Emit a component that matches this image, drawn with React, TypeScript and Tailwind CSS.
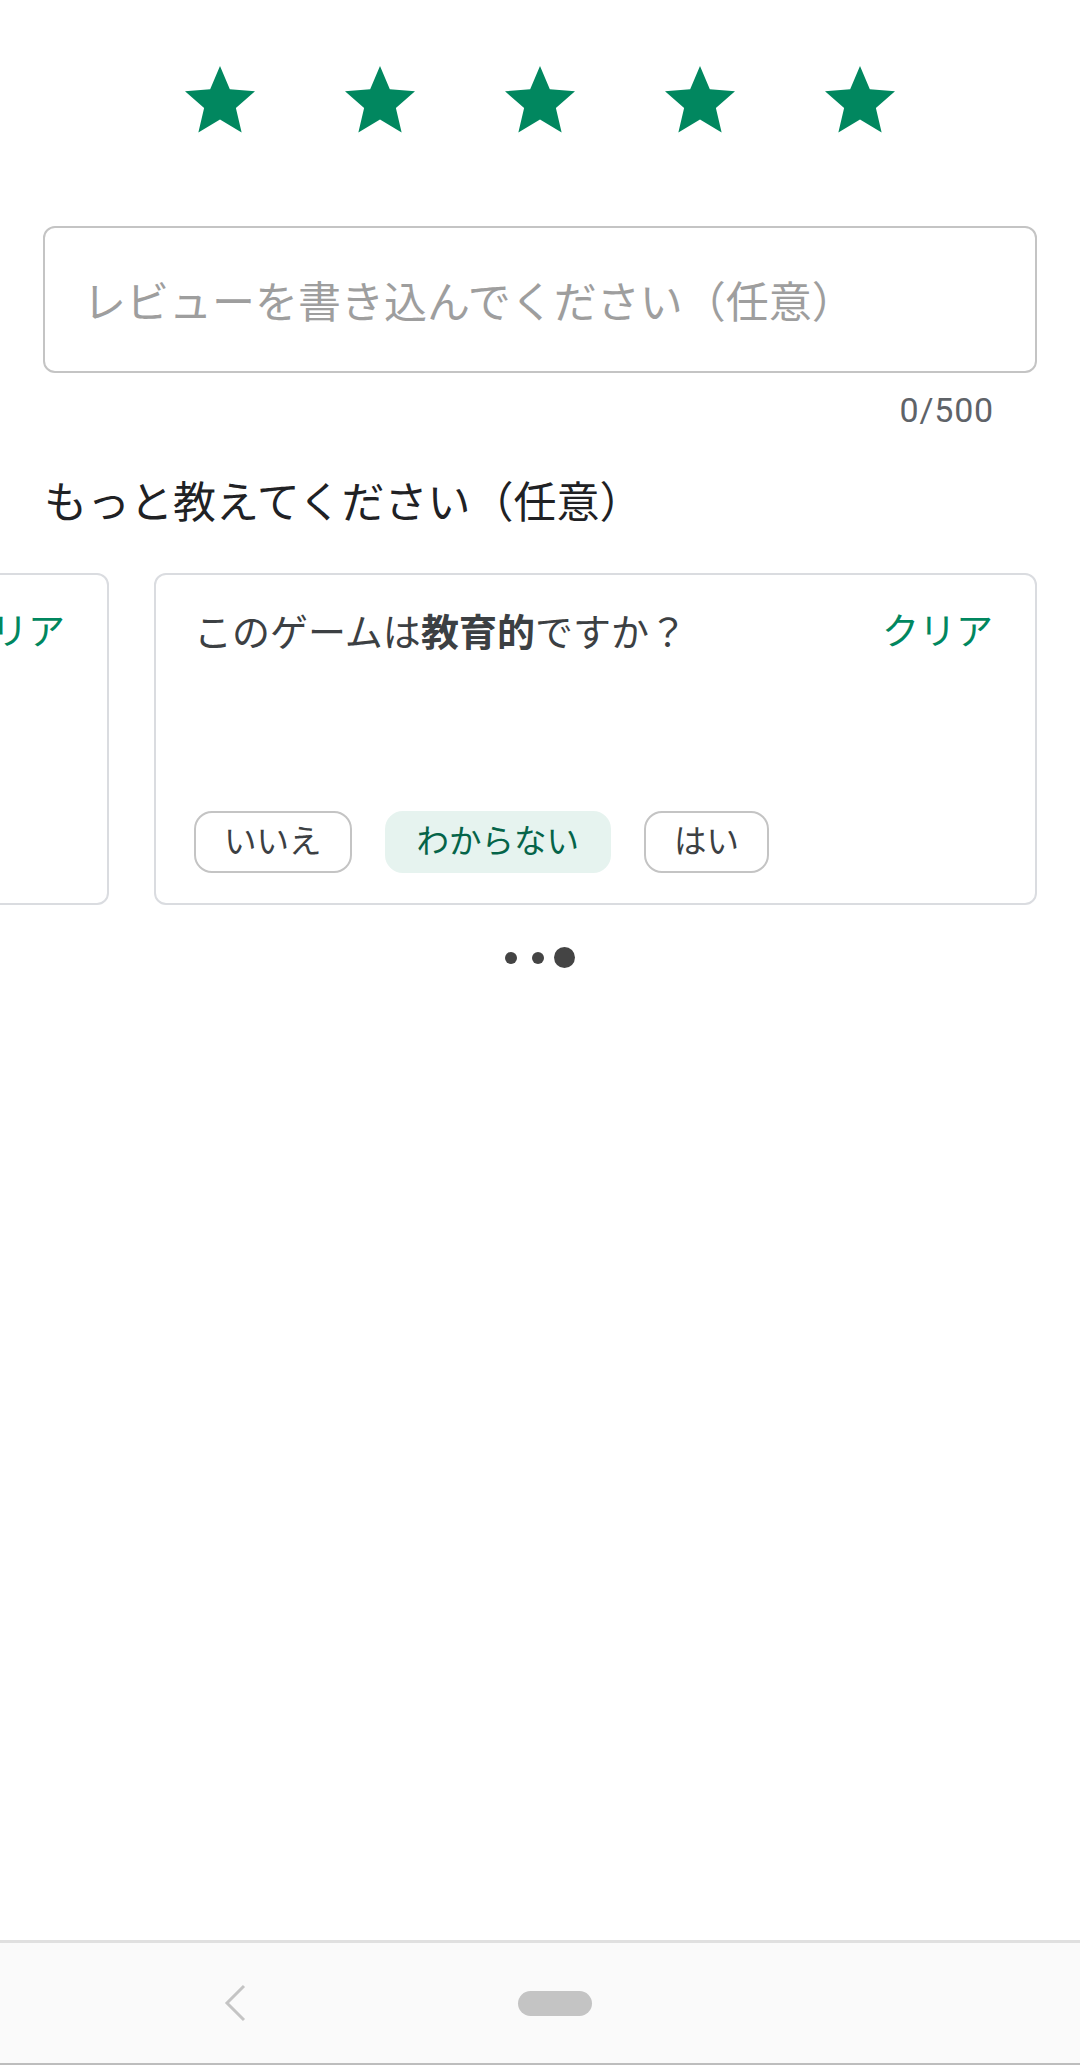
const STAR = 'M12 17.27L18.18 21l-1.64-7.03L22 9.24l-7.19-.61L12 2 9.19 8.63 2 9.24l5.46 4.73L5.82 21z';

function Star() {
  return (
    <div className="w-[160px] flex justify-center">
      <svg width="84" height="84" viewBox="0 0 24 24">
        <path d={STAR} fill="#01875f" />
      </svg>
    </div>
  );
}

function Pill({ label, active }: { label: string; active?: boolean }) {
  return (
    <div
      className={
        active
          ? 'h-[62px] px-[30px] flex items-center rounded-[18px] bg-[#e6f3ef] text-[#056449] text-[32.5px] border-[2px] border-[#e6f3ef]'
          : 'h-[62px] px-[28px] flex items-center rounded-[18px] bg-white text-[#3c4043] text-[32.5px] border-[2.5px] border-[#c4c4c4]'
      }
    >
      {label}
    </div>
  );
}

function Card({ question, className }: { question?: boolean; className?: string }) {
  return (
    <div
      className={`shrink-0 w-[883px] h-[332px] border-[2.5px] border-[#dadce0] rounded-[12px] pt-[33px] pb-[30px] pl-[38px] pr-[42px] flex flex-col justify-between ${className ?? ''}`}
    >
      <div className="flex justify-between items-center h-[50px]">
        <div className="text-[38px] text-[#3c4043]">
          {question && (
            <>
              このゲームは<span className="font-bold">教育的</span>ですか？
            </>
          )}
        </div>
        <div className="text-[37px] text-[#01875f]">クリア</div>
      </div>
      <div className="flex gap-[33px]">
        <Pill label="いいえ" />
        <Pill label="わからない" active />
        <Pill label="はい" />
      </div>
    </div>
  );
}

export default function App() {
  return (
    <div
      className="w-[1080px] h-[2065px] flex flex-col bg-white overflow-hidden"
      style={{ fontFamily: 'Roboto, "Noto Sans CJK JP", sans-serif' }}
    >
      <div className="flex-1 overflow-hidden">
        {/* STARS */}
        <div className="pt-[59px] flex justify-center">
          <Star />
          <Star />
          <Star />
          <Star />
          <Star />
        </div>

        {/* REVIEW INPUT */}
        <div className="mt-[83px] mx-[43px] h-[147px] border-[2.5px] border-[#c4c4c4] rounded-[12px] flex items-center pl-[38px] pt-[8px]">
          <span className="text-[43px] text-[#9e9e9e] leading-none">レビューを書き込んでください（任意）</span>
        </div>
        <div className="mt-[17px] h-[40px] pr-[86px] flex items-center justify-end text-[34px] tracking-[0.8px] text-[#5f6368]">
          0/500
        </div>

        {/* MORE */}
        <div className="mt-[45px] h-[56px] pl-[44px] flex items-center text-[43px] text-[#202124]">
          もっと教えてください（任意）
        </div>

        <div className="mt-[42px] flex gap-[45px] ml-[-774px]">
          <Card />
          <Card question />
        </div>

        {/* DOTS */}
        <div className="mt-[42px] h-[21px] flex items-center justify-center">
          <div className="w-[12px] h-[12px] rounded-full bg-[#444]" />
          <div className="ml-[15px] w-[12px] h-[12px] rounded-full bg-[#444]" />
          <div className="ml-[10px] w-[21px] h-[21px] rounded-full bg-[#444]" />
        </div>
      </div>

      {/* NAV BAR */}
      <div className="h-[125px] shrink-0 border-t-[3px] border-b-[2px] border-t-[#e0e0e0] border-b-[#bdbdbd] bg-[#fafafa] flex items-center pl-[223px]">
        <svg width="24" height="38" viewBox="0 0 24 38">
          <path d="M21 2 L4 19 L21 36" fill="none" stroke="#c4c4c4" strokeWidth="3" />
        </svg>
        <div className="ml-[271px] w-[74px] h-[25px] rounded-full bg-[#c4c4c4]" />
      </div>
    </div>
  );
}
